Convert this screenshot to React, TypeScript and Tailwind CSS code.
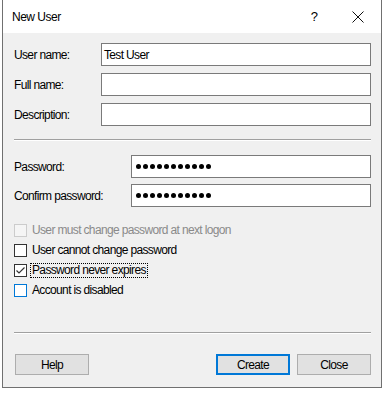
import React from 'react';

const font = { fontFamily: '"Liberation Sans", Arial, sans-serif' };

// Text field in the dialog
const Field = ({ children }: { children?: React.ReactNode }) => (
  <div className="flex-1 h-[23px] border border-[#7a7a7a] bg-white flex items-center pl-[2px] text-[12px] tracking-[-0.65px] text-black">
    {children}
  </div>
);

const Dots = () => (
  <div className="flex gap-[2px] pl-[2px]">
    {Array.from({ length: 11 }).map((_, i) => (
      <div key={i} className="w-[5px] h-[5px] rounded-full bg-black" />
    ))}
  </div>
);

const Separator = () => (
  <div>
    <div className="h-px bg-[#a0a0a0]" />
    <div className="h-px bg-white" />
  </div>
);

type BoxState = 'disabled' | 'normal' | 'checked' | 'hover';

const CheckRow = ({ label, state, focused }: { label: string; state: BoxState; focused?: boolean }) => {
  const boxCls =
    state === 'disabled'
      ? 'border-[#cccccc] bg-[#f5f5f5]'
      : state === 'hover'
      ? 'border-[#0078d7] bg-white'
      : 'border-[#333333] bg-white';
  return (
    <div className="h-[20px] flex items-center">
      <div className={`w-[13px] h-[13px] border ${boxCls} flex items-center justify-center`}>
        {state === 'checked' && (
          <svg width="11" height="11" viewBox="0 0 11 11">
            <path d="M1.5 5.5 L4 8 L9.5 2.5" fill="none" stroke="#333" strokeWidth="1.2" />
          </svg>
        )}
      </div>
      <span
        className={`ml-[3px] text-[12px] tracking-[-0.65px] leading-[13px] px-px ${
          state === 'disabled' ? 'text-[#8a8a8a]' : 'text-black'
        } ${focused ? 'border border-dotted border-black' : 'border border-transparent'}`}
      >
        {label}
      </span>
    </div>
  );
};

const Btn = ({ label, primary }: { label: string; primary?: boolean }) => (
  <button
    className={`w-[74px] h-[21px] bg-[#e1e1e1] text-[12px] tracking-[-0.65px] text-black flex items-center justify-center ${
      primary ? 'border-2 border-[#0078d7]' : 'border border-[#adadad]'
    }`}
  >
    {label}
  </button>
);

export default function App() {
  return (
    <div className="w-[388px] h-[395px] bg-white" style={font}>
      <div className="ml-[2px] w-[380px] h-[388px] border-x border-b border-[#707070] flex flex-col">
        {/* title bar */}
        <div className="h-[33px] bg-white flex items-center pl-[9px] pr-[17px]">
          <span className="text-[12px] tracking-[-0.5px] text-black">New User</span>
          <span className="ml-auto text-[13px] text-black">?</span>
          <svg className="ml-[34px]" width="12" height="12" viewBox="0 0 12 12">
            <path d="M0.5 0.5 L11.5 11.5 M11.5 0.5 L0.5 11.5" stroke="#111" strokeWidth="1" />
          </svg>
        </div>

        {/* body */}
        <div className="flex-1 bg-[#f0f0f0] pl-[11px] pr-[10px] pt-[10px] flex flex-col text-[12px] tracking-[-0.65px]">
          <div className="flex flex-col gap-[7px]">
            <div className="flex items-center">
              <span className="w-[87px]">User name:</span>
              <Field>Test User</Field>
            </div>
            <div className="flex items-center">
              <span className="w-[87px]">Full name:</span>
              <Field />
            </div>
            <div className="flex items-center">
              <span className="w-[87px]">Description:</span>
              <Field />
            </div>
          </div>

          <div className="mt-[13px]">
            <Separator />
          </div>

          <div className="mt-[14px] flex flex-col gap-[6px]">
            <div className="flex items-center">
              <span className="w-[117px]">Password:</span>
              <Field>
                <Dots />
              </Field>
            </div>
            <div className="flex items-center">
              <span className="w-[117px]">Confirm password:</span>
              <Field>
                <Dots />
              </Field>
            </div>
          </div>

          <div className="mt-[13px] flex flex-col">
            <CheckRow label="User must change password at next logon" state="disabled" />
            <CheckRow label="User cannot change password" state="normal" />
            <CheckRow label="Password never expires" state="checked" focused />
            <CheckRow label="Account is disabled" state="hover" />
          </div>

          <div className="mt-[32px]">
            <Separator />
          </div>

          <div className="mt-[20px] flex items-center pl-px">
            <Btn label="Help" />
            <div className="ml-auto flex gap-[7px]">
              <Btn label="Create" primary />
              <Btn label="Close" />
            </div>
          </div>
        </div>
      </div>
    </div>
  );
}
